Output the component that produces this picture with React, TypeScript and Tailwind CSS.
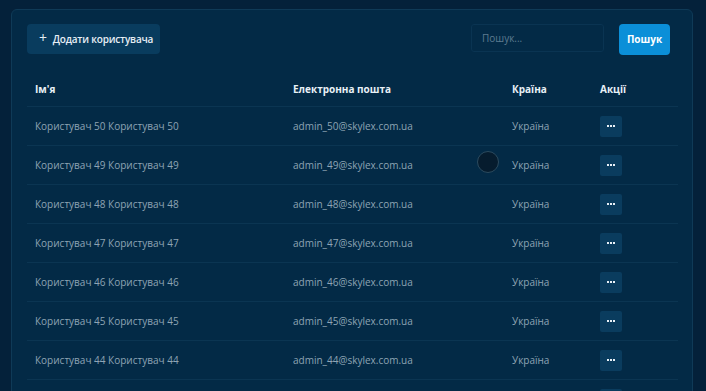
import React from "react";

const users = [50, 49, 48, 47, 46, 45, 44, 43];

const font = { fontFamily: '"Open Sans", "Noto Sans", sans-serif' };

const App = () => {
  return (
    <div className="h-screen overflow-hidden bg-[#04213a] pl-[11px] pt-[9px] pr-[13px]" style={font}>
      <div className="relative rounded-t-[6px] border border-[#0f3a57] bg-[#032a46] px-[15px] pt-[14px] pb-4 h-[400px] overflow-hidden">
        {/* Toolbar */}
        <div className="flex items-start justify-between pr-[7px]">
          <button className="flex h-[30px] w-[133px] items-center gap-[6px] whitespace-nowrap rounded-[4px] bg-[#093c5e] pl-[12px] text-[10px] font-semibold tracking-[-0.2px] text-[#e6eef5]">
            <span className="-mt-[3px] text-[14px] font-normal leading-none">+</span>
            Додати користувача
          </button>
          <div className="flex items-start gap-[15px]">
            <div className="h-[28px] w-[133px] rounded-[3px] border border-[#0a3452] bg-[#032a46] pl-[10px] text-[10px] leading-[26px] text-[#5d7b90]">
              Пошук...
            </div>
            <button className="h-[31px] w-[51px] rounded-[4px] bg-[#0b8fd8] text-[10px] font-bold text-white">
              Пошук
            </button>
          </div>
        </div>

        {/* Table */}
        <div className="mt-[16px] w-[651px]">
          <div className="grid h-[36px] grid-cols-[258px_219px_88px_1fr] items-center border-b border-[#0b3552] pt-[1px] text-[10px] font-bold text-[#e8f0f6]">
            <div className="pl-[8px]">Ім'я</div>
            <div className="pl-[8px]">Електронна пошта</div>
            <div className="pl-[8px]">Країна</div>
            <div className="pl-[8px]">Акції</div>
          </div>
          {users.map((n) => (
            <div
              key={n}
              className="grid h-[39px] grid-cols-[258px_219px_88px_1fr] items-center border-b border-[#0b3552] text-[10px] text-[#8ea4b4]"
            >
              <div className="pl-[8px]">
                Користувач {n} Користувач {n}
              </div>
              <div className="pl-[8px]">admin_{n}@skylex.com.ua</div>
              <div className="pl-[8px]">Україна</div>
              <div className="pl-[8px]">
                <button className="flex h-[21px] w-[22px] items-center justify-center rounded-[2px] bg-[#0a3c5e]">
                  <svg width="8" height="2" viewBox="0 0 8 2">
                    <rect x="0" y="0" width="2" height="2" fill="#e8f0f6" />
                    <rect x="3" y="0" width="2" height="2" fill="#e8f0f6" />
                    <rect x="6" y="0" width="2" height="2" fill="#e8f0f6" />
                  </svg>
                </button>
              </div>
            </div>
          ))}
        </div>

        {/* cursor marker */}
        <div className="absolute left-[465px] top-[141px] h-[22px] w-[22px] rounded-full border-[1.5px] border-[#2b4a5e] bg-[#061c2e]" />
      </div>
    </div>
  );
};

export default App;
